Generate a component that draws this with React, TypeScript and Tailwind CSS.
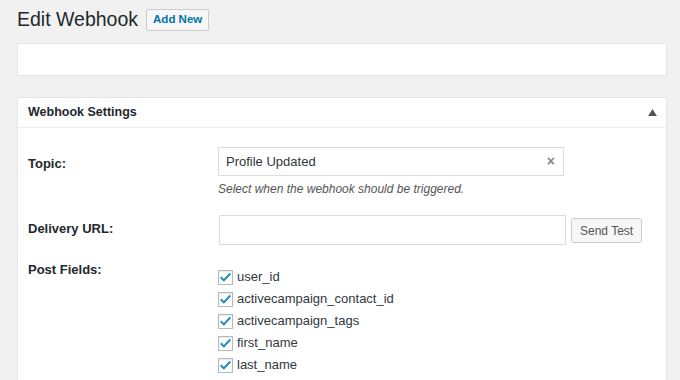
import React from 'react';

const fields = ['user_id', 'activecampaign_contact_id', 'activecampaign_tags', 'first_name', 'last_name'];

function Check() {
  return (
    <span className="w-[15px] h-[15px] border border-[#b4b9be] bg-white flex items-center justify-center shadow-[inset_0_1px_2px_rgba(0,0,0,0.1)]">
      <svg viewBox="0 0 16 16" className="w-[13px] h-[13px]">
        <path d="M3 8.5l3 3 7-7.5" fill="none" stroke="#1e8cbe" strokeWidth="2.4" strokeLinecap="square" />
      </svg>
    </span>
  );
}

export default function App() {
  return (
    <div className="w-[680px] h-[380px] overflow-hidden bg-[#f1f1f1] text-[#23282d] font-['Liberation_Sans',Arial,sans-serif]">
      <div className="pl-[17px] pr-[13px]">
        {/* Heading */}
        <div className="flex items-center gap-[8px] pt-[8px] h-[31px]">
          <h1 className="text-[19.5px] leading-none font-normal">Edit Webhook</h1>
          <button className="h-[22px] px-[6px] border border-[#ccc] bg-[#f7f7f7] rounded-[2px] text-[#0073aa] text-[11.5px] font-semibold">
            Add New
          </button>
        </div>

        <div className="mt-[12px] h-[33px] bg-white border border-[#e5e5e5]" />

        {/* Settings panel */}
        <div className="mt-[21px] bg-white border border-[#e5e5e5] h-[300px]">
          <div className="h-[30px] flex items-center justify-between pl-[10px] pr-[9px] border-b border-[#eee]">
            <span className="text-[12.5px] font-semibold">Webhook Settings</span>
            <svg viewBox="0 0 10 8" className="w-[9px] h-[7px]">
              <path d="M0 8L5 0L10 8Z" fill="#555" />
            </svg>
          </div>

          <div className="pl-[10px] pt-[19px] text-[13px]">
            <div className="flex">
              <div className="w-[190px] pt-[7px] font-semibold">Topic:</div>
              <div>
                <div className="w-[346px] h-[29px] border border-[#ddd] flex items-center justify-between pl-[7px] pr-[8px] text-[#32373c]">
                  <span>Profile Updated</span>
                  <span className="text-[#888] text-[14px] font-bold">×</span>
                </div>
                <div className="mt-[4px] italic text-[12px] text-[#555]">Select when the webhook should be triggered.</div>
              </div>
            </div>

            <div className="flex mt-[17px]">
              <div className="w-[191px] pt-[4px] font-semibold">Delivery URL:</div>
              <div className="w-[347px] h-[30px] border border-[#ddd]" />
              <button className="ml-[5px] mt-[3px] h-[25px] px-[8px] border border-[#ccc] bg-[#f7f7f7] rounded-[3px] text-[#555] text-[12px]">
                Send Test
              </button>
            </div>

            <div className="flex mt-[15px]">
              <div className="w-[190px] font-semibold">Post Fields:</div>
              <div className="pt-[9px] flex flex-col gap-[6px]">
                {fields.map((f) => (
                  <label key={f} className="flex items-center gap-[4px] h-[16px] text-[#32373c]">
                    <Check />
                    <span>{f}</span>
                  </label>
                ))}
              </div>
            </div>
          </div>
        </div>
      </div>
    </div>
  );
}
